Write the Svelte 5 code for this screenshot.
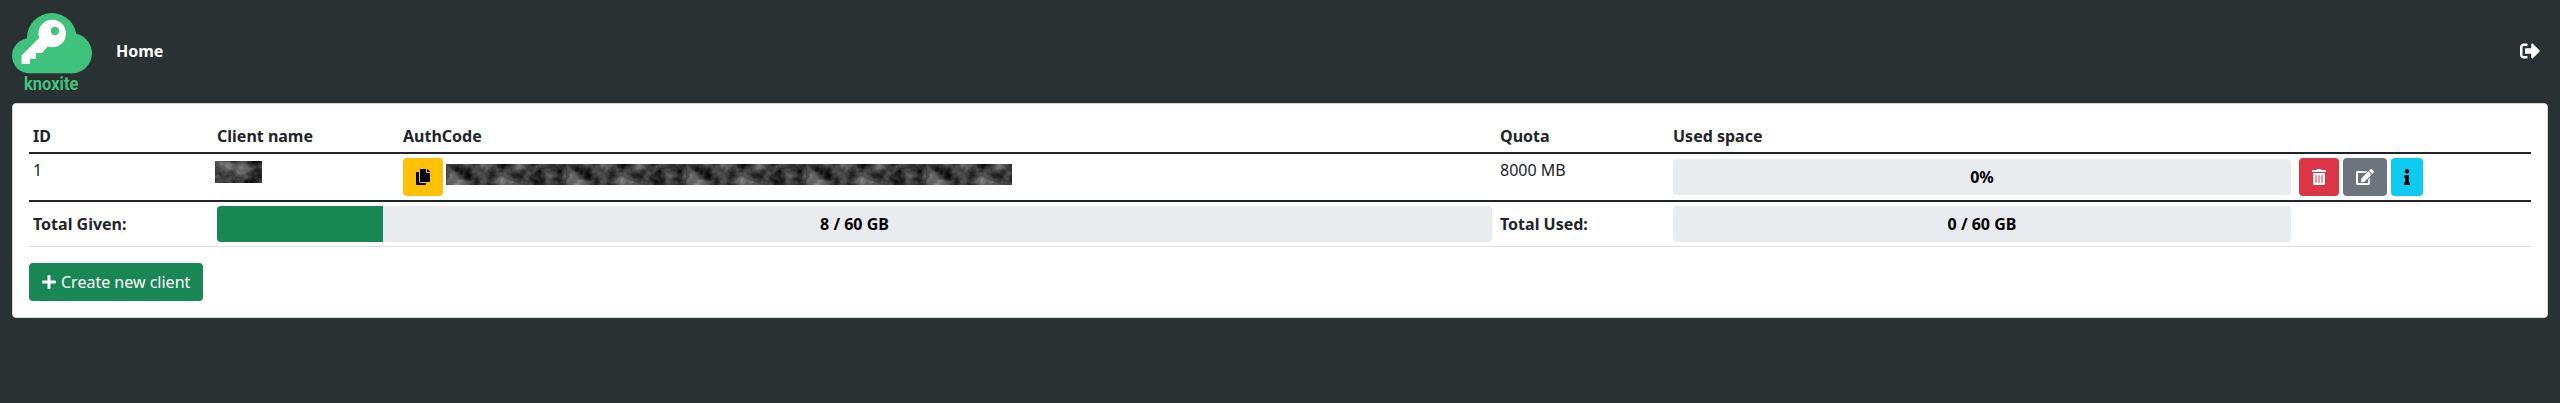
<script>
  const icons = {
    copy: [448, 'M320 448v40c0 13.255-10.745 24-24 24H24c-13.255 0-24-10.745-24-24V120c0-13.255 10.745-24 24-24h72v296c0 30.879 25.121 56 56 56h168zm0-344V0H152c-13.255 0-24 10.745-24 24v368c0 13.255 10.745 24 24 24h272c13.255 0 24-10.745 24-24V128H344c-13.2 0-24-10.8-24-24zm120.971-31.029L375.029 7.029A24 24 0 0 0 358.059 0H352v96h96v-6.059a24 24 0 0 0-7.029-16.97z'],
    trash: [448, 'M32 464a48 48 0 0 0 48 48h288a48 48 0 0 0 48-48V128H32zm272-256a16 16 0 0 1 32 0v224a16 16 0 0 1-32 0zm-96 0a16 16 0 0 1 32 0v224a16 16 0 0 1-32 0zm-96 0a16 16 0 0 1 32 0v224a16 16 0 0 1-32 0zM432 32H312l-9.4-18.7A24 24 0 0 0 281.1 0H166.8a23.72 23.72 0 0 0-21.4 13.3L136 32H16A16 16 0 0 0 0 48v32a16 16 0 0 0 16 16h416a16 16 0 0 0 16-16V48a16 16 0 0 0-16-16z'],
    edit: [576, 'M402.6 83.2l90.2 90.2c3.8 3.8 3.8 10 0 13.8L274.4 405.6l-92.8 10.3c-12.4 1.4-22.9-9.1-21.5-21.5l10.3-92.8L388.8 83.2c3.8-3.8 10-3.8 13.8 0zm162-22.9l-48.8-48.8c-15.2-15.2-39.9-15.2-55.2 0l-35.4 35.4c-3.8 3.8-3.8 10 0 13.8l90.2 90.2c3.8 3.8 10 3.8 13.8 0l35.4-35.4c15.2-15.3 15.2-40 0-55.2zM384 346.2V448H64V128h229.8c3.2 0 6.2-1.3 8.5-3.5l40-40c7.6-7.6 2.2-20.5-8.5-20.5H48C21.5 64 0 85.5 0 112v352c0 26.5 21.5 48 48 48h352c26.5 0 48-21.5 48-48V306.2c0-10.7-12.9-16-20.5-8.5l-40 40c-2.2 2.3-3.5 5.3-3.5 8.5z'],
    info: [192, 'M20 424.229h20V279.771H20c-11.046 0-20-8.954-20-20V212c0-11.046 8.954-20 20-20h112c11.046 0 20 8.954 20 20v212.229h20c11.046 0 20 8.954 20 20V492c0 11.046-8.954 20-20 20H20c-11.046 0-20-8.954-20-20v-47.771c0-11.046 8.954-20 20-20zM96 0C56.235 0 24 32.235 24 72s32.235 72 72 72 72-32.235 72-72S135.764 0 96 0z'],
    plus: [448, 'M416 208H272V64c0-17.67-14.33-32-32-32h-32c-17.67 0-32 14.33-32 32v144H32c-17.67 0-32 14.33-32 32v32c0 17.67 14.33 32 32 32h144v144c0 17.67 14.33 32 32 32h32c17.67 0 32-14.33 32-32V304h144c17.67 0 32-14.33 32-32v-32c0-17.67-14.33-32-32-32z'],
    signOut: [512, 'M497 273L329 441c-15 15-41 4.5-41-17v-96H152c-13.3 0-24-10.7-24-24v-96c0-13.3 10.7-24 24-24h136V88c0-21.4 25.9-32 41-17l168 168c9.3 9.4 9.3 24.6 0 34zM192 436v-40c0-6.6-5.4-12-12-12H96c-17.7 0-32-14.3-32-32V160c0-17.7 14.3-32 32-32h84c6.6 0 12-5.4 12-12V76c0-6.6-5.4-12-12-12H96c-53 0-96 43-96 96v192c0 53 43 96 96 96h84c6.6 0 12-5.4 12-12z']
  };
  const actions = ['trash', 'edit', 'info'];
</script>

{#snippet icon(name, size = 16)}
  <svg class="icon" width={(icons[name][0] / 512) * size} height={size} viewBox="0 0 {icons[name][0]} 512" aria-hidden="true">
    <path d={icons[name][1]} />
  </svg>
{/snippet}

{#snippet progress(value, label)}
  <div class="progress">
    <div class="bar" style="width: {value}%"></div>
    <span>{label}</span>
  </div>
{/snippet}

{#snippet noise(id, w, h, seed)}
  <svg class="noise" width={w} height={h} aria-hidden="true">
    <filter id={id} x="0" y="0" width={w} height={h} filterUnits="userSpaceOnUse" color-interpolation-filters="sRGB">
      <feTurbulence type="fractalNoise" baseFrequency="0.06 0.07" numOctaves="5" {seed} x="0" y="0" width={Math.min(w, 120)} height={h} />
      <feColorMatrix values="0.8 0 0 0 -0.16  0.8 0 0 0 -0.16  0.8 0 0 0 -0.16  0 0 0 0 1" x="0" y="0" width={Math.min(w, 120)} height={h} />
      <feTile />
    </filter>
    <rect width={w} height={h} filter="url(#{id})" />
  </svg>
{/snippet}

<nav>
  <svg class="logo" width="80" height="80" viewBox="12 13 80 80" role="img" aria-label="knoxite">
    <g fill="#3fc37c">
      <circle cx="29.5" cy="55.8" r="17.5" />
      <circle cx="51.8" cy="37.8" r="24.8" />
      <circle cx="72" cy="53.3" r="20" />
      <path d="M29.5 45H72v28.3H29.5z" />
    </g>
    <g fill="#fff">
      <circle cx="52.2" cy="33.5" r="13.8" />
      <path d="M39 38 21.6 55.4V64H30v-5.2h6V53h6l5.5-6z" />
    </g>
    <circle cx="54.9" cy="31" r="4.2" fill="#3fc37c" />
    <text x="24" y="89.6" textLength="54.4" lengthAdjust="spacingAndGlyphs">knoxite</text>
  </svg>
  <span class="home">Home</span>
  <span class="logout">{@render icon('signOut', 20)}</span>
</nav>

<main>
  <div class="table">
    <div class="row head">
      <div>ID</div><div>Client name</div><div>AuthCode</div><div>Quota</div><div>Used space</div><div></div>
    </div>
    <div class="row client">
      <div>1</div>
      <div class="name">{@render noise('name-noise', 47, 22, 8)}</div>
      <div class="auth">
        <button class="btn copy" aria-label="Copy">{@render icon('copy')}</button>
        {@render noise('code-noise', 566, 21, 3)}
      </div>
      <div>8000 MB</div>
      <div class="middle">{@render progress(0, '0%')}</div>
      <div class="actions">
        {#each actions as action}
          <button class="btn {action}" aria-label={action}>{@render icon(action)}</button>
        {/each}
      </div>
    </div>
    <div class="row totals">
      <div>Total Given:</div>
      <div class="wide">{@render progress(13, '8 / 60 GB')}</div>
      <div>Total Used:</div>
      <div>{@render progress(0, '0 / 60 GB')}</div>
      <div></div>
    </div>
  </div>
  <button class="btn create">{@render icon('plus')}<span>Create new client</span></button>
</main>

<style>
  :global(body) {
    background: #2a3133;
    font-family: 'Noto Sans', sans-serif;
    font-size: 16px;
    line-height: 24px;
    color: #212529;
  }
  nav {
    display: flex;
    align-items: center;
    box-sizing: border-box;
    height: 103px;
    padding: 0 20px 1px 12px;
    color: #fff;
  }
  .logo {
    margin-top: 4px;
  }
  .logo text {
    font: 700 18px Roboto, sans-serif;
    fill: #3fc37c;
  }
  .home {
    margin-left: 24px;
    font-weight: 700;
  }
  .logout {
    margin-left: auto;
    display: flex;
  }
  .icon {
    display: block;
    fill: currentColor;
    flex: none;
  }
  main {
    margin: 0 12px;
    box-sizing: border-box;
    height: 215px;
    padding: 16px;
    border: 1px solid #d4d6d6;
    border-radius: 4px;
    background: #fff;
  }
  .row {
    display: grid;
    grid-template-columns: 184px 186px 1097px 173px 626px 236px;
  }
  .row > div {
    padding: 4px;
    min-width: 0;
  }
  .head {
    font-weight: 700;
    border-bottom: 2px solid #212529;
  }
  .client {
    height: 46px;
    border-bottom: 2px solid #212529;
  }
  .totals {
    height: 44px;
    align-items: center;
    font-weight: 700;
    border-bottom: 1px solid #dee2e6;
  }
  .wide {
    grid-column: span 2;
  }
  .row > .name {
    padding: 7px 2px;
  }
  .auth {
    display: flex;
    align-items: center;
    gap: 3px;
  }
  .auth .noise {
    margin-top: -5px;
  }
  .noise {
    display: block;
  }
  .row > .middle {
    padding-top: 5px;
  }
  .progress {
    display: grid;
    height: 36px;
    border-radius: 4px;
    overflow: hidden;
    background: #e9ecef;
    color: #000;
    font-weight: 700;
  }
  .progress > * {
    grid-area: 1 / 1;
  }
  .progress span {
    place-self: center;
  }
  .bar {
    background: #198754;
  }
  .actions {
    display: flex;
    gap: 4px;
  }
  .btn {
    display: flex;
    align-items: center;
    box-sizing: border-box;
    height: 38px;
    padding: 0 13px;
    border: 0;
    border-radius: 4px;
    font: inherit;
    color: #fff;
  }
  .copy {
    background: #ffc107;
    color: #000;
  }
  .trash {
    background: #dc3545;
  }
  .edit {
    background: #6c757d;
  }
  .info {
    background: #0dcaf0;
    color: #000;
  }
  .create {
    gap: 5px;
    width: 174px;
    margin-top: 16px;
    background: #198754;
    white-space: nowrap;
  }
</style>
